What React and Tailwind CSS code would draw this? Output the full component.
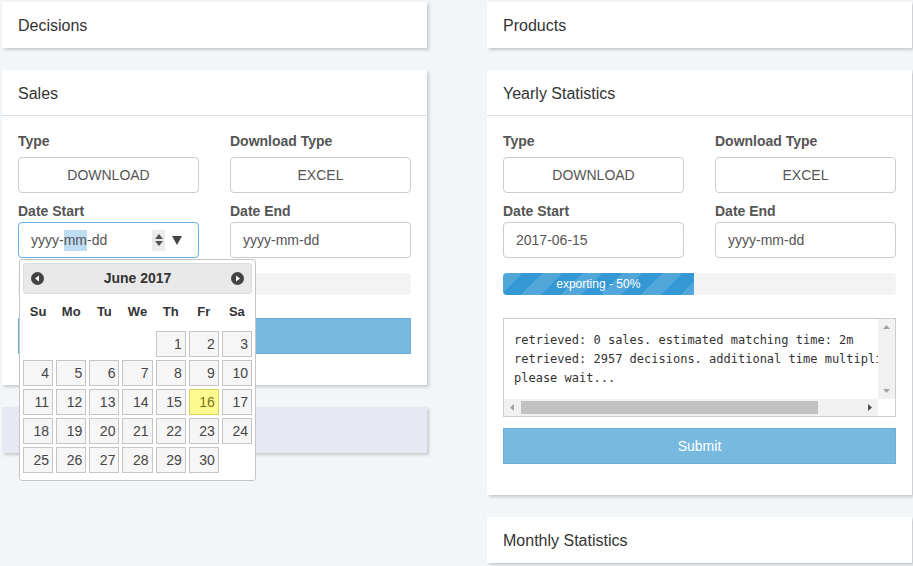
import React from "react";

const font = { fontFamily: "'Liberation Sans', Arial, sans-serif" };

const Card = ({ title, children, tint = false }) => (
  <div
    className={`${tint ? "bg-[#e6e9f4]" : "bg-white"} shadow-[2px_2px_3px_rgba(0,0,0,0.18)]`}
  >
    <div
      className={`h-[46px] flex items-center px-4 pt-[2px] text-[16px] text-[#333] ${
        children ? "border-b border-[#d5e0ea]" : ""
      }`}
    >
      {title}
    </div>
    {children}
  </div>
);

const Label = ({ children }) => (
  <div className="text-[14px] font-bold text-[#555] leading-5">{children}</div>
);

const BoxButton = ({ children }) => (
  <div className="mt-[6px] h-[36px] flex items-center justify-center border border-[#ccc] rounded text-[14px] text-[#555] bg-white">
    {children}
  </div>
);

const DateInput = ({ value, focused = false, children }) => (
  <div className="relative mt-[1px]">
    <div
      className={`h-[36px] flex items-center pl-3 pr-4 rounded border text-[14px] text-[#555] bg-white ${
        focused ? "border-[#66afe9]" : "border-[#ccc]"
      }`}
    >
      {focused ? (
        <>
          <span>yyyy-</span>
          <span className="bg-[#bfdcf5]">mm</span>
          <span>-dd</span>
          <span className="ml-auto flex items-center gap-[7px]">
            <span className="w-[13px] h-[21px] bg-[#ececec] flex flex-col items-center justify-center gap-[2px]">
              <svg width="8" height="5" viewBox="0 0 8 5"><path d="M0 5 L4 0 L8 5 Z" fill="#555" /></svg>
              <svg width="8" height="5" viewBox="0 0 8 5"><path d="M0 0 L4 5 L8 0 Z" fill="#555" /></svg>
            </span>
            <svg width="10" height="9" viewBox="0 0 10 9"><path d="M0 0 L10 0 L5 9 Z" fill="#444" /></svg>
          </span>
        </>
      ) : (
        <span>{value}</span>
      )}
    </div>
    {children}
  </div>
);

const Progress = ({ pct, label }) => (
  <div className="mt-[15px] h-[22px] rounded bg-[#f3f3f3] overflow-hidden flex">
    {pct > 0 && (
      <div
        className="h-full flex items-center justify-center text-[12px] text-white bg-[#3498d4] bg-[linear-gradient(135deg,rgba(255,255,255,0.15)_25%,transparent_25%,transparent_50%,rgba(255,255,255,0.15)_50%,rgba(255,255,255,0.15)_75%,transparent_75%,transparent)] [background-size:40px_40px]"
        style={{ width: `${pct}%` }}
      >
        {label}
      </div>
    )}
  </div>
);

const SubmitButton = ({ className = "" }) => (
  <div
    className={`h-[36px] flex items-center justify-center bg-[#77b9df] border border-[#6cb0d9] text-white text-[14px] ${className}`}
  >
    Submit
  </div>
);

const NavIcon = ({ dir }) => (
  <svg width="13" height="13" viewBox="0 0 13 13">
    <circle cx="6.5" cy="6.5" r="6.5" fill="#444" />
    {dir === "prev" ? (
      <path d="M4 6.5 L8 3.5 L8 9.5 Z" fill="#fff" />
    ) : (
      <path d="M9 6.5 L5 3.5 L5 9.5 Z" fill="#fff" />
    )}
  </svg>
);

const Calendar = () => {
  const cells = [];
  for (let i = 0; i < 4; i++) cells.push(null);
  for (let d = 1; d <= 30; d++) cells.push(d);
  return (
    <div className="absolute left-[1px] top-full mt-[1px] w-[237px] bg-white border border-[#c5c5c5] rounded-[3px] p-[3px] z-10">
      <div className="h-[31px] bg-[#e9e9e9] border border-[#dddddd] rounded-[3px] flex items-center justify-between px-[7px]">
        <NavIcon dir="prev" />
        <span className="text-[14px] font-bold text-[#333]">June 2017</span>
        <NavIcon dir="next" />
      </div>
      <div className="grid grid-cols-7 gap-x-[3px] mt-[7px] h-[22px] items-center">
        {["Su", "Mo", "Tu", "We", "Th", "Fr", "Sa"].map(n => (
          <div key={n} className="text-center text-[13px] font-bold text-[#333]">
            {n}
          </div>
        ))}
      </div>
      <div className="grid grid-cols-7 gap-[3px] mt-[8px] pb-[4px]">
        {cells.map((d, i) =>
          d === null ? (
            <div key={i} className="h-[26px]" />
          ) : (
            <div
              key={i}
              className={`h-[26px] border flex items-center justify-end pr-[3px] text-[14px] ${
                d === 16
                  ? "bg-[#fffa90] border-[#dad55e] text-[#777620]"
                  : "bg-[#f6f6f6] border-[#c5c5c5] text-[#454545]"
              }`}
            >
              {d}
            </div>
          )
        )}
      </div>
    </div>
  );
};

const LogBox = () => (
  <div className="mt-[23px] h-[99px] border border-[#ccc] flex flex-col bg-white">
    <div className="flex flex-1 min-h-0">
      <div
        className="flex-1 overflow-hidden whitespace-pre text-[12px] leading-[19px] text-[#333] pl-[10px] pt-[12px]"
        style={{ fontFamily: "'DejaVu Sans Mono', monospace" }}
      >
        {"retrieved: 0 sales. estimated matching time: 2m\nretrieved: 2957 decisions. additional time multiplier: 2x\nplease wait..."}
      </div>
      <div className="w-[17px] bg-[#f1f1f1] flex flex-col items-center justify-between py-[6px]">
        <svg width="7" height="4" viewBox="0 0 7 4"><path d="M0 4 L3.5 0 L7 4 Z" fill="#a3a3a3" /></svg>
        <svg width="7" height="4" viewBox="0 0 7 4"><path d="M0 0 L3.5 4 L7 0 Z" fill="#a3a3a3" /></svg>
      </div>
    </div>
    <div className="h-[17px] flex">
      <div className="flex-1 bg-[#f1f1f1] flex items-center px-[6px]">
        <svg width="4" height="7" viewBox="0 0 4 7"><path d="M4 0 L0 3.5 L4 7 Z" fill="#a3a3a3" /></svg>
        <div className="ml-[7px] w-[297px] h-[13px] bg-[#c1c1c1]" />
        <svg className="ml-auto" width="4" height="7" viewBox="0 0 4 7"><path d="M0 0 L4 3.5 L0 7 Z" fill="#505050" /></svg>
      </div>
      <div className="w-[17px] bg-white" />
    </div>
  </div>
);

const ExportForm = ({ startValue, calendar, progress, log }) => (
  <div className="px-4 pt-[15px] pb-[31px]">
    <div className="grid grid-cols-2 gap-x-[31px]">
      <div>
        <Label>Type</Label>
        <BoxButton>DOWNLOAD</BoxButton>
      </div>
      <div>
        <Label>Download Type</Label>
        <BoxButton>EXCEL</BoxButton>
      </div>
      <div className="mt-[8px]">
        <Label>Date Start</Label>
        {calendar ? (
          <DateInput focused>
            <Calendar />
          </DateInput>
        ) : (
          <DateInput value={startValue} />
        )}
      </div>
      <div className="mt-[8px]">
        <Label>Date End</Label>
        <DateInput value="yyyy-mm-dd" />
      </div>
    </div>
    <Progress pct={progress} label="exporting - 50%" />
    {log && <LogBox />}
    <SubmitButton className={log ? "mt-[11px]" : "mt-[23px]"} />
  </div>
);

export default function App() {
  return (
    <div className="w-[913px] h-[566px] overflow-hidden bg-[#f3f6f9] pt-[2px] pl-[2px]" style={font}>
      <div className="flex gap-[60px]">
        <div className="w-[425px] flex flex-col gap-[22px]">
          <Card title="Decisions" />
          <Card title="Sales">
            <ExportForm calendar progress={0} />
          </Card>
          <Card title="" tint />
        </div>
        <div className="w-[425px] shrink-0 flex flex-col gap-[22px]">
          <Card title="Products" />
          <Card title="Yearly Statistics">
            <ExportForm startValue="2017-06-15" progress={48.5} log />
          </Card>
          <Card title="Monthly Statistics" />
        </div>
      </div>
    </div>
  );
}
